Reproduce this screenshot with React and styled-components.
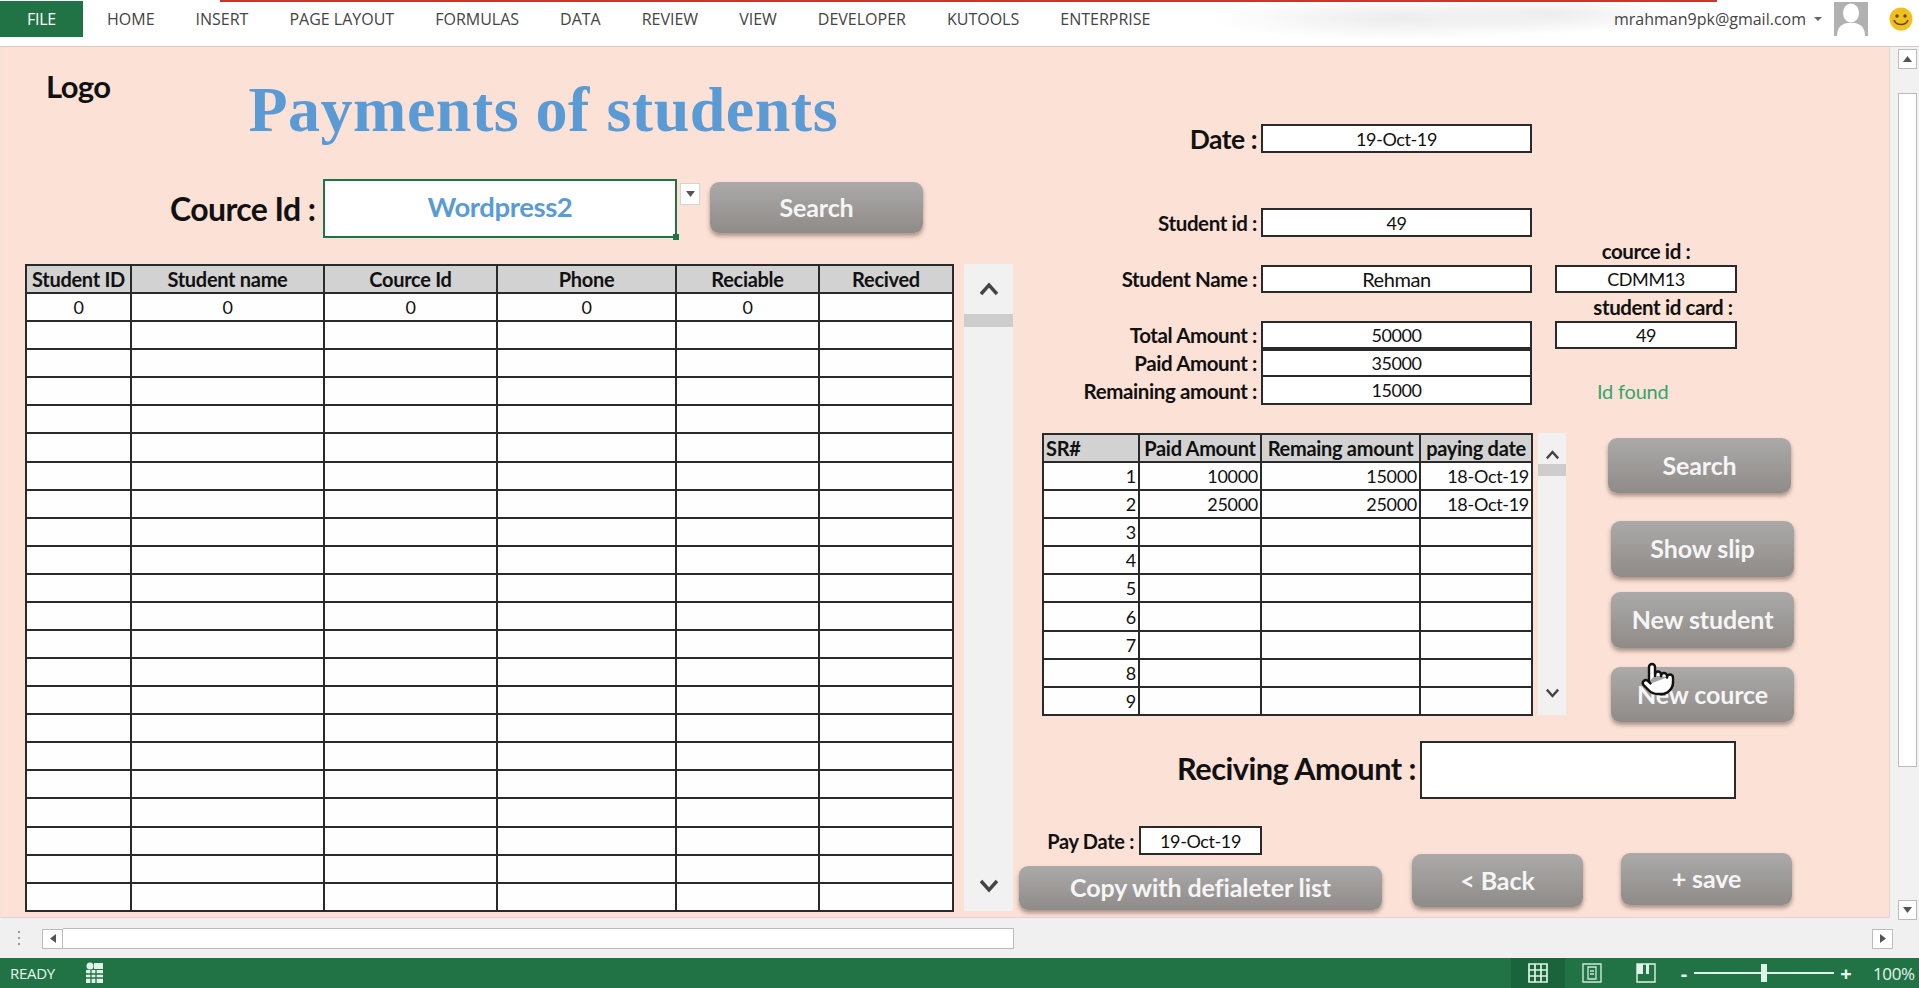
import React from "react";
import styled, { createGlobalStyle } from "styled-components";
import { Pointer } from "lucide-react";

const GlobalStyle = createGlobalStyle`
  html, body { margin: 0; padding: 0; background: #f1f1f1; }
  * { box-sizing: border-box; }
`;

const calibri = `Lato, "Liberation Sans", sans-serif`;
const segoe = `"Open Sans", "Liberation Sans", sans-serif`;

const tabs = ["HOME", "INSERT", "PAGE LAYOUT", "FORMULAS", "DATA", "REVIEW", "VIEW", "DEVELOPER", "KUTOOLS", "ENTERPRISE"];

const mainCols = [105, 193, 173, 179, 143, 134];
const mainHead = ["Student ID", "Student name", "Cource Id", "Phone", "Reciable", "Recived"];
const mainRows = Array.from({ length: 22 }, (_, i) => (i === 0 ? ["0", "0", "0", "0", "0", ""] : ["", "", "", "", "", ""]));

const payCols = [96, 122, 159, 112];
const payHead = ["SR#", "Paid Amount", "Remaing amount", "paying date"];
const payRows = [
  ["1", "10000", "15000", "18-Oct-19"],
  ["2", "25000", "25000", "18-Oct-19"],
  ["3", "", "", ""],
  ["4", "", "", ""],
  ["5", "", "", ""],
  ["6", "", "", ""],
  ["7", "", "", ""],
  ["8", "", "", ""],
  ["9", "", "", ""],
];

export default function App() {
  return (
    <Page>
      <GlobalStyle />
      <Ribbon>
        <FileTab>FILE</FileTab>
        <TabList>
          {tabs.map((t) => (
            <Tab key={t}>{t}</Tab>
          ))}
        </TabList>
        <UserArea>
          <Email>mrahman9pk@gmail.com</Email>
          <Caret />
          <svg width="34" height="34" viewBox="0 0 34 34">
            <rect width="34" height="34" fill="#b1b1b1" />
            <ellipse cx="17" cy="11" rx="8" ry="9.5" fill="#fff" />
            <path d="M3 34c0-9 5-12 10-13h8c5 1 10 4 10 13z" fill="#fff" />
          </svg>
          <svg width="24" height="24" viewBox="0 0 24 24">
            <circle cx="12" cy="12" r="11.5" fill="#f2c01e" />
            <circle cx="8" cy="9" r="1.7" fill="#5a4a10" />
            <circle cx="16" cy="9" r="1.7" fill="#5a4a10" />
            <path d="M5 13c2 6 12 6 14 0" fill="none" stroke="#5a4a10" strokeWidth="1.6" />
          </svg>
        </UserArea>
      </Ribbon>

      <Workspace>
        <Sheet>
          <LeftPane>
            <TitleRow>
              <Logo>Logo</Logo>
              <Title>Payments of students</Title>
            </TitleRow>
            <CourseRow>
              <CourseLabel>Cource Id :</CourseLabel>
              <CourseInput>
                Wordpress2
                <FillHandle />
              </CourseInput>
              <DropButton>
                <svg width="9" height="6" viewBox="0 0 9 6">
                  <path d="M0 0h9L4.5 6z" fill="#555" />
                </svg>
              </DropButton>
              <ActionButton $w={213} $h={51} $ml={10} $mt={3}>Search</ActionButton>
            </CourseRow>
            <TableRow>
              <DataTable $width={929}>
                <colgroup>
                  {mainCols.map((w, i) => (
                    <col key={i} style={{ width: w }} />
                  ))}
                </colgroup>
                <thead>
                  <tr>
                    {mainHead.map((h) => (
                      <HeadCell key={h} $align="center">{h}</HeadCell>
                    ))}
                  </tr>
                </thead>
                <tbody>
                  {mainRows.map((r, i) => (
                    <tr key={i}>
                      {r.map((c, j) => (
                        <Cell key={j} $align="center">{c}</Cell>
                      ))}
                    </tr>
                  ))}
                </tbody>
              </DataTable>
              <FormScroll $width={49} $height={647} $ml={10} $thumbTop={50} $thumbH={13}>
                <Chevron size={24} dir="up" />
                <Chevron size={24} dir="down" />
              </FormScroll>
            </TableRow>
          </LeftPane>

          <RightPane>
            <FormGrid>
              <DateLabel>Date :</DateLabel>
              <ValueBox>19-Oct-19</ValueBox>
              <RowGap $h={55} />
              <FieldLabel>Student id :</FieldLabel>
              <ValueBox>49</ValueBox>
              <SideLabel $row={5}>cource id :</SideLabel>
              <FieldLabel $row={6}>Student Name :</FieldLabel>
              <ValueBox $row={6} $wide>Rehman</ValueBox>
              <SideBox $row={6}>CDMM13</SideBox>
              <SideLabel $row={7} $shift={34}>student id card :</SideLabel>
              <FieldLabel $row={8}>Total Amount :</FieldLabel>
              <ValueBox $row={8}>50000</ValueBox>
              <SideBox $row={8}>49</SideBox>
              <FieldLabel $row={9}>Paid Amount :</FieldLabel>
              <ValueBox $row={9}>35000</ValueBox>
              <FieldLabel $row={10}>Remaining amount :</FieldLabel>
              <ValueBox $row={10} $joined>15000</ValueBox>
              <IdFound>Id found</IdFound>
            </FormGrid>

            <MiddleRow>
              <DataTable $width={489} $ml={23}>
                <colgroup>
                  {payCols.map((w, i) => (
                    <col key={i} style={{ width: w }} />
                  ))}
                </colgroup>
                <thead>
                  <tr>
                    {payHead.map((h, i) => (
                      <HeadCell key={h} $align={i === 0 ? "left" : "center"}>{h}</HeadCell>
                    ))}
                  </tr>
                </thead>
                <tbody>
                  {payRows.map((r, i) => (
                    <tr key={i}>
                      {r.map((c, j) => (
                        <Cell key={j} $align="right">{c}</Cell>
                      ))}
                    </tr>
                  ))}
                </tbody>
              </DataTable>
              <FormScroll $width={28} $height={282} $ml={5} $thumbTop={31} $thumbH={12}>
                <Chevron size={17} dir="up" />
                <Chevron size={17} dir="down" />
              </FormScroll>
              <ButtonColumn>
                <ActionButton $w={183} $h={55} $ml={0} $mt={5}>Search</ActionButton>
                <ActionButton $w={183} $h={56} $ml={3} $mt={28}>Show slip</ActionButton>
                <ActionButton $w={183} $h={56} $ml={3} $mt={15}>New student</ActionButton>
                <ActionButton $w={183} $h={55} $ml={3} $mt={19}>New cource</ActionButton>
                <HandCursor>
                  <Pointer size={36} fill="#fff" color="#111" strokeWidth={1.6} />
                </HandCursor>
              </ButtonColumn>
            </MiddleRow>

            <ReceiveRow>
              <ReceiveLabel>Reciving Amount :</ReceiveLabel>
              <ReceiveInput />
            </ReceiveRow>

            <PayDateRow>
              <PayLabel>Pay Date :</PayLabel>
              <PayBox>19-Oct-19</PayBox>
            </PayDateRow>

            <BottomRow>
              <ActionButton $w={363} $h={44} $ml={0} $mt={13}>Copy with defialeter list</ActionButton>
              <ActionButton $w={171} $h={53} $ml={30} $mt={1}>&lt; Back</ActionButton>
              <ActionButton $w={171} $h={52} $ml={38} $mt={0}>+ save</ActionButton>
            </BottomRow>
          </RightPane>
        </Sheet>

        <VScroll>
          <ScrollBtn>
            <svg width="9" height="6" viewBox="0 0 9 6"><path d="M0 6h9L4.5 0z" fill="#555" /></svg>
          </ScrollBtn>
          <VThumb />
          <ScrollBtn>
            <svg width="9" height="6" viewBox="0 0 9 6"><path d="M0 0h9L4.5 6z" fill="#555" /></svg>
          </ScrollBtn>
        </VScroll>
      </Workspace>

      <HScrollRow>
        <Grip />
        <ScrollBtn $square>
          <svg width="6" height="9" viewBox="0 0 6 9"><path d="M6 0v9L0 4.5z" fill="#555" /></svg>
        </ScrollBtn>
        <HThumb />
        <HTrack />
        <ScrollBtn $square>
          <svg width="6" height="9" viewBox="0 0 6 9"><path d="M0 0v9l6-4.5z" fill="#555" /></svg>
        </ScrollBtn>
      </HScrollRow>

      <StatusBar>
        <Ready>READY</Ready>
        <svg width="20" height="22" viewBox="0 0 20 22">
          <circle cx="6" cy="4" r="3.5" fill="#dff3e6" />
          <rect x="10" y="1" width="9" height="6" fill="#dff3e6" />
          <rect x="2" y="8" width="17" height="13" fill="#dff3e6" />
          <path d="M2 12h17M2 16h17M7 8v13M12 8v13" stroke="#217346" strokeWidth="1.3" />
        </svg>
        <StatusRight>
          <ViewButton $active>
            <svg width="20" height="20" viewBox="0 0 20 20">
              <path d="M1 1h18v18H1zM7 1v18M13 1v18M1 7h18M1 13h18" fill="none" stroke="#dff3e6" strokeWidth="1.7" />
            </svg>
          </ViewButton>
          <ViewButton>
            <svg width="20" height="20" viewBox="0 0 20 20">
              <path d="M1 1h18v18H1z" fill="none" stroke="#cfe9d8" strokeWidth="1.4" />
              <path d="M6 4h8v12H6zM8 8h4M8 11h4" fill="none" stroke="#cfe9d8" strokeWidth="1.3" />
            </svg>
          </ViewButton>
          <ViewButton>
            <svg width="20" height="20" viewBox="0 0 20 20">
              <path d="M1 1h18v18H1z" fill="none" stroke="#dff3e6" strokeWidth="1.4" />
              <path d="M1 1h6v10H1zM10 1h3v10h-3z" fill="#dff3e6" />
            </svg>
          </ViewButton>
          <ZoomGlyph $ml={4}>-</ZoomGlyph>
          <ZoomTrack>
            <ZoomThumb />
          </ZoomTrack>
          <ZoomGlyph $ml={5}>+</ZoomGlyph>
          <ZoomLabel>100%</ZoomLabel>
        </StatusRight>
      </StatusBar>
    </Page>
  );
}

function Chevron({ size, dir }) {
  return (
    <svg width={size} height={size} viewBox="0 0 24 24">
      <path
        d={dir === "up" ? "M4 16l8-9 8 9" : "M4 8l8 9 8-9"}
        fill="none"
        stroke="#444"
        strokeWidth="3.4"
      />
    </svg>
  );
}

const Page = styled.div`
  width: 1919px;
  height: 988px;
  display: flex;
  flex-direction: column;
  overflow: hidden;
  background: #f1f1f1;
  font-family: ${calibri};
  color: #111;
`;

const Ribbon = styled.header`
  position: relative;
  height: 47px;
  flex: none;
  display: flex;
  align-items: flex-start;
  padding-top: 1px;
  border-bottom: 1px solid #d9c8c4;
  background:
    radial-gradient(ellipse 190px 22px at 1400px 18px, #ececec, transparent),
    radial-gradient(ellipse 130px 20px at 1550px 14px, #ededed, transparent),
    #fff;
  &::before {
    content: "";
    position: absolute;
    top: 0;
    left: 220px;
    width: 1497px;
    height: 2px;
    background: #c8362c;
  }
`;

const FileTab = styled.div`
  width: 83px;
  height: 36px;
  display: flex;
  align-items: center;
  justify-content: center;
  background: #217346;
  color: #fff;
  font: 16px ${segoe};
  letter-spacing: -0.3px;
`;

const TabList = styled.nav`
  display: flex;
  gap: 41px;
  margin-left: 24px;
  height: 36px;
  align-items: center;
`;

const Tab = styled.div`
  font: 16px ${segoe};
  color: #444;
  white-space: nowrap;
`;

const UserArea = styled.div`
  margin-left: auto;
  height: 36px;
  display: flex;
  align-items: center;
  padding-right: 6px;
`;

const Email = styled.div`
  font: 16px ${segoe};
  color: #444;
`;

const Caret = styled.div`
  width: 0;
  height: 0;
  margin: 0 12px 0 8px;
  border-left: 4px solid transparent;
  border-right: 4px solid transparent;
  border-top: 4px solid #666;
  & + svg {
    margin-right: 21px;
  }
`;

const Workspace = styled.main`
  height: 871px;
  flex: none;
  display: flex;
`;

const Sheet = styled.section`
  width: 1890px;
  height: 871px;
  display: flex;
  background: #fce1d6;
  border-left: 1px solid #efe3de;
  border-right: 1px solid #e2d3cd;
  border-bottom: 1px solid #e2d3cd;
`;

const LeftPane = styled.div`
  width: 1018px;
  flex: none;
  padding-left: 24px;
`;

const TitleRow = styled.div`
  height: 132px;
  display: flex;
  align-items: flex-start;
`;

const Logo = styled.div`
  margin: 18px 0 0 21px;
  font: 700 31px/42px ${calibri};
  letter-spacing: -0.6px;
`;

const Title = styled.h1`
  margin: 30px 0 0 138px;
  font: 700 64px/66px "Liberation Serif", serif;
  letter-spacing: 0.5px;
  color: #5b9bd5;
  white-space: nowrap;
`;

const CourseRow = styled.div`
  height: 59px;
  display: flex;
  align-items: flex-start;
  padding-left: 145px;
`;

const CourseLabel = styled.div`
  width: 153px;
  height: 59px;
  font: 700 32px/60px ${calibri};
  letter-spacing: -0.6px;
  white-space: nowrap;
`;

const CourseInput = styled.div`
  position: relative;
  width: 354px;
  height: 59px;
  border: 2px solid #217346;
  background: #fff;
  color: #5b9bd5;
  font: 700 27.5px/52px ${calibri};
  letter-spacing: -0.4px;
  text-align: center;
`;

const FillHandle = styled.span`
  position: absolute;
  right: -4px;
  bottom: -4px;
  width: 6px;
  height: 6px;
  background: #217346;
`;

const DropButton = styled.div`
  width: 20px;
  height: 22px;
  margin: 4px 0 0 3px;
  display: flex;
  align-items: center;
  justify-content: center;
  background: #fff;
  border: 1px solid #d4d4d4;
`;

const ActionButton = styled.div`
  width: ${(p) => p.$w}px;
  height: ${(p) => p.$h}px;
  margin-left: ${(p) => p.$ml}px;
  margin-top: ${(p) => p.$mt}px;
  flex: none;
  display: flex;
  align-items: center;
  justify-content: center;
  padding-bottom: 2px;
  border-radius: 9px;
  background: linear-gradient(#acaaa8, #8e8b89);
  box-shadow: 0 3px 4px rgba(100, 80, 70, 0.55);
  color: #f5f5f5;
  font: 700 25px ${calibri};
  letter-spacing: -0.1px;
  white-space: nowrap;
`;

const TableRow = styled.div`
  margin-top: 26px;
  display: flex;
  align-items: flex-start;
`;

const DataTable = styled.table`
  width: ${(p) => p.$width}px;
  margin-left: ${(p) => p.$ml || 0}px;
  flex: none;
  table-layout: fixed;
  border-collapse: collapse;
  background: #fefefe;
  font-family: ${calibri};
  font-size: 18px;
`;

const HeadCell = styled.th`
  height: 28.08px;
  padding: 0 2px;
  border: 2px solid #2a2a2a;
  background: #d2d2d2;
  font-size: 20px;
  font-weight: 700;
  letter-spacing: -0.3px;
  text-align: ${(p) => p.$align};
  white-space: nowrap;
  overflow: hidden;
`;

const Cell = styled.td`
  height: 28.08px;
  padding: 0 2px;
  border: 2px solid #2a2a2a;
  font-weight: 400;
  text-align: ${(p) => p.$align};
  letter-spacing: -0.3px;
`;

const FormScroll = styled.div`
  position: relative;
  width: ${(p) => p.$width}px;
  height: ${(p) => p.$height}px;
  margin-left: ${(p) => p.$ml}px;
  flex: none;
  display: flex;
  flex-direction: column;
  align-items: center;
  justify-content: space-between;
  padding: 6px 0;
  background: #f1f1f1;
  &::after {
    content: "";
    position: absolute;
    left: 0;
    right: 0;
    top: ${(p) => p.$thumbTop}px;
    height: ${(p) => p.$thumbH}px;
    background: #cdcdcd;
  }
  & svg:first-child {
    margin-top: 8px;
  }
  & svg:nth-child(2) {
    margin-bottom: 8px;
  }
`;

const RightPane = styled.div`
  flex: 1;
  min-width: 0;
  padding-top: 77px;
`;

const FormGrid = styled.div`
  display: grid;
  grid-template-columns: 242px 271px 23px 182px;
  grid-template-rows: 29px 55px 29px 28px 28px 28px 28px 28px 28px;
  align-items: center;
`;

const DateLabel = styled.div`
  grid-column: 1;
  padding-right: 4px;
  text-align: right;
  font: 700 26.5px ${calibri};
  letter-spacing: -0.5px;
`;

const RowGap = styled.div`
  grid-column: 1 / -1;
  grid-row: 2;
  height: ${(p) => p.$h}px;
`;

const FieldLabel = styled.div`
  grid-column: 1;
  grid-row: ${(p) => (p.$row ? p.$row - 1 : "auto")};
  padding-right: 4px;
  text-align: right;
  font: 700 20.5px ${calibri};
  letter-spacing: -0.4px;
  white-space: nowrap;
`;

const ValueBox = styled.div`
  grid-column: 2;
  grid-row: ${(p) => (p.$row ? p.$row - 1 : "auto")};
  height: 100%;
  display: flex;
  align-items: center;
  justify-content: center;
  background: #fff;
  border: 2px solid #2a2a2a;
  border-top-width: ${(p) => (p.$joined ? 0 : 2)}px;
  font-size: ${(p) => (p.$wide ? 20 : 18)}px;
  letter-spacing: -0.4px;
`;

const SideBox = styled(ValueBox)`
  grid-column: 4;
`;

const SideLabel = styled.div`
  grid-column: 4;
  grid-row: ${(p) => p.$row - 1};
  justify-self: center;
  white-space: nowrap;
  margin-left: ${(p) => p.$shift || 0}px;
  font: 700 20.5px ${calibri};
  letter-spacing: -0.4px;
`;

const IdFound = styled.div`
  grid-column: 4;
  grid-row: 9;
  padding-left: 42px;
  color: #35a56b;
  font-size: 20px;
  letter-spacing: -0.2px;
`;

const MiddleRow = styled.div`
  margin-top: 28px;
  height: 290px;
  display: flex;
  align-items: flex-start;
`;

const ButtonColumn = styled.div`
  position: relative;
  margin-left: 42px;
  display: flex;
  flex-direction: column;
`;

const HandCursor = styled.div`
  position: absolute;
  left: 32px;
  top: 228px;
  line-height: 0;
`;

const ReceiveRow = styled.div`
  margin-top: 18px;
  display: flex;
  align-items: center;
`;

const ReceiveLabel = styled.div`
  width: 401px;
  padding: 0 4px 3px 0;
  text-align: right;
  font: 700 30.7px ${calibri};
  letter-spacing: -0.5px;
`;

const ReceiveInput = styled.div`
  width: 316px;
  height: 58px;
  background: #fff;
  border: 2px solid #2a2a2a;
`;

const PayDateRow = styled.div`
  margin-top: 27px;
  height: 29px;
  display: flex;
  align-items: center;
  padding-left: 27px;
`;

const PayLabel = styled.div`
  width: 93px;
  padding-right: 5px;
  text-align: right;
  font: 700 20px ${calibri};
  letter-spacing: -0.3px;
  white-space: nowrap;
`;

const PayBox = styled.div`
  width: 123px;
  height: 29px;
  display: flex;
  align-items: center;
  justify-content: center;
  background: #fff;
  border: 2px solid #2a2a2a;
  font-size: 18px;
  letter-spacing: -0.4px;
`;

const BottomRow = styled.div`
  margin-top: -2px;
  display: flex;
  align-items: flex-start;
`;

const VScroll = styled.aside`
  width: 29px;
  height: 873px;
  flex: none;
  position: relative;
  z-index: 1;
  display: flex;
  flex-direction: column;
  align-items: center;
  padding: 2px 0 0 6px;
  background: #f1f1f1;
`;

const ScrollBtn = styled.div`
  width: ${(p) => (p.$square ? 21 : 19)}px;
  height: 20px;
  flex: none;
  display: flex;
  align-items: center;
  justify-content: center;
  background: #fff;
  border: 1px solid #bbb;
`;

const VThumb = styled.div`
  width: 19px;
  height: 674px;
  margin: 24px 0 auto;
  background: #fff;
  border: 1px solid #bbb;
`;

const HScrollRow = styled.div`
  height: 40px;
  flex: none;
  display: flex;
  align-items: center;
  padding: 1px 26px 0 0;
  background: #f0f0f0;
`;

const Grip = styled.div`
  width: 2px;
  height: 16px;
  margin: 0 22px 0 18px;
  background: repeating-linear-gradient(#999 0 2px, transparent 2px 6px);
`;

const HThumb = styled.div`
  width: 951px;
  height: 21px;
  background: #fff;
  border: 1px solid #bbb;
  border-left: none;
`;

const HTrack = styled.div`
  flex: 1;
  height: 21px;
`;

const StatusBar = styled.footer`
  height: 30px;
  flex: none;
  display: flex;
  align-items: center;
  padding-left: 10px;
  background: #217346;
  color: #e8f5ec;
`;

const Ready = styled.div`
  width: 74px;
  font: 15px ${segoe};
  letter-spacing: -0.3px;
`;

const StatusRight = styled.div`
  margin-left: auto;
  height: 30px;
  display: flex;
  align-items: center;
  padding-right: 2px;
`;

const ViewButton = styled.div`
  width: 54px;
  height: 30px;
  display: flex;
  align-items: center;
  justify-content: center;
  background: ${(p) => (p.$active ? "#19643a" : "transparent")};
`;

const ZoomGlyph = styled.div`
  margin-left: ${(p) => p.$ml}px;
  width: 14px;
  text-align: center;
  font: 700 20px ${segoe};
`;

const ZoomTrack = styled.div`
  position: relative;
  width: 140px;
  height: 2px;
  margin-left: 3px;
  background: #dff3e6;
`;

const ZoomThumb = styled.span`
  position: absolute;
  left: 67px;
  top: -8px;
  width: 6px;
  height: 18px;
  background: #dff3e6;
`;

const ZoomLabel = styled.div`
  width: 44px;
  margin-left: 20px;
  font: 17px ${segoe};
  letter-spacing: -0.4px;
`;
